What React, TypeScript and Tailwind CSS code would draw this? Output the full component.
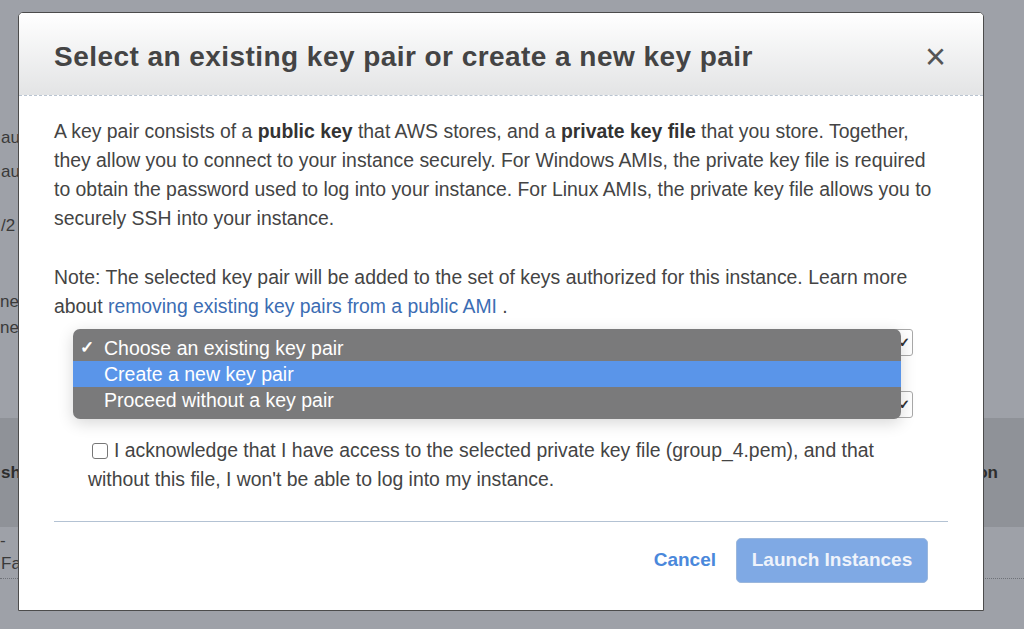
import React from "react";

const font = { fontFamily: '"Liberation Sans", Arial, Helvetica, sans-serif' };

export default function App() {
  return (
    <div
      className="relative w-[1024px] h-[629px] overflow-hidden bg-[#9ea1a8] text-[#3a3a3a]"
      style={font}
    >
      {/* background page (behind the modal) */}
      <div className="flex flex-col text-[17px] leading-[20px]">
        <div className="h-[128px]" />
        <div className="pl-[1px]">aul</div>
        <div className="h-[14px]" />
        <div className="pl-[1px]">aul</div>
        <div className="h-[34px]" />
        <div className="pl-[1px]">/2</div>
        <div className="h-[56px]" />
        <div>ne</div>
        <div className="h-[6px]" />
        <div>ne</div>
        <div className="h-[80px]" />
        <div className="h-[109px] bg-[#8f9298] flex items-center justify-between font-bold text-[#2e2e2e]">
          <span className="pl-[1px]">sh</span>
          <span className="pr-[26px]">on</span>
        </div>
        <div className="h-[6px]" />
        <div className="leading-[16px]">-</div>
        <div className="h-[5px]" />
        <div className="pl-[1px]">Fa</div>
        <div className="border-b border-dotted border-[#6f7278] mt-[4px]" />
      </div>

      {/* modal */}
      <div className="absolute left-[18px] top-[12px] w-[966px] h-[599px] bg-white border-[1.5px] border-[#4c4c4c] rounded-t-[5px] flex flex-col overflow-hidden">
        {/* header */}
        <div className="h-[83px] shrink-0 bg-gradient-to-b from-white to-[#e3e4e5] border-b border-dashed border-[#b9c4d1] flex items-center justify-between pl-[35px] pr-[37px] pt-[6px]">
          <h1 className="text-[28px] font-bold text-[#444] tracking-[0.45px]">
            Select an existing key pair or create a new key pair
          </h1>
          <span className="text-[36px] leading-none text-[#555]">×</span>
        </div>

        {/* body */}
        <div className="px-[35px] pt-[21px] text-[19.4px] leading-[29px] text-[#444]">
          <p>
            A key pair consists of a <b className="text-[#333]">public key</b> that AWS stores, and a{" "}
            <b className="text-[#333]">private key file</b> that you store. Together,
            <br />
            they allow you to connect to your instance securely. For Windows AMIs, the private key file is required
            <br />
            to obtain the password used to log into your instance. For Linux AMIs, the private key file allows you to
            <br />
            securely SSH into your instance.
          </p>
          <p className="mt-[30px]">
            Note: The selected key pair will be added to the set of keys authorized for this instance. Learn more
            <br />
            about <span className="text-[#3c6db3]">removing existing key pairs from a public AMI</span> .
          </p>

          {/* selects + opened menu */}
          <div className="relative mt-[8px] h-[98px]">
            <div className="ml-[30px] mr-[35px] mt-[7px] h-[27px] border border-[#a9a9a9] rounded-[3px] flex justify-end items-center pr-[2px] text-[#333] text-[13px] font-bold">
              ✓
            </div>
            <div className="ml-[30px] mr-[35px] mt-[35px] h-[27px] border border-[#a9a9a9] rounded-[3px] flex justify-end items-center pr-[2px] text-[#333] text-[13px] font-bold">
              ✓
            </div>

            <div className="absolute left-[19px] top-[0px] w-[828px] h-[90px] rounded-[7px] bg-[#7a7a7b] py-[6px] text-white text-[19.5px] leading-[26px] shadow-[0_4px_16px_rgba(0,0,0,0.16)]">
              <div className="flex items-center pl-[7px]">
                <span className="w-[24px] text-[17px] font-bold">✓</span>
                <span>Choose an existing key pair</span>
              </div>
              <div className="flex items-center pl-[31px] bg-[#5a95e9]">Create a new key pair</div>
              <div className="flex items-center pl-[31px]">Proceed without a key pair</div>
            </div>
          </div>

          {/* acknowledge */}
          <div className="mt-[9px] pl-[34px] leading-[29px]">
            <span className="inline-block align-[-2px] w-[16px] h-[16px] border border-[#777] rounded-[3px] bg-white mr-[6px] ml-[4px]" />
            I acknowledge that I have access to the selected private key file (group_4.pem), and that
            <br />
            without this file, I won't be able to log into my instance.
          </div>

          <div className="mt-[27px] border-b border-[#b3c2d3]" />
        </div>

        {/* footer */}
        <div className="flex items-center justify-end gap-[20px] pr-[55px] mt-[16px]">
          <span className="text-[19px] font-bold text-[#4a88db]">Cancel</span>
          <button className="w-[192px] h-[45px] rounded-[5px] bg-[#7fa9e4] border border-[#9bb7dc] text-[19px] font-bold text-[#eef3fb]">
            Launch Instances
          </button>
        </div>
      </div>
    </div>
  );
}
